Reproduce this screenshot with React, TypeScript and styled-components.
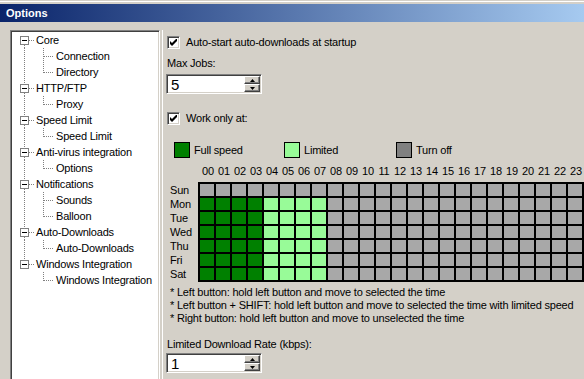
import styled, { createGlobalStyle } from "styled-components";

const GlobalStyle = createGlobalStyle`
  html, body {
    margin: 0;
    padding: 0;
    background: #d4d0c8;
    overflow: hidden;
  }
  body {
    font-family: "Liberation Sans", Arial, sans-serif;
    font-size: 11px;
    letter-spacing: -0.2px;
    color: #000;
  }
`;

type TreeNode = { label: string; children: string[] };

const tree: TreeNode[] = [
  { label: "Core", children: ["Connection", "Directory"] },
  { label: "HTTP/FTP", children: ["Proxy"] },
  { label: "Speed Limit", children: ["Speed Limit"] },
  { label: "Anti-virus integration", children: ["Options"] },
  { label: "Notifications", children: ["Sounds", "Balloon"] },
  { label: "Auto-Downloads", children: ["Auto-Downloads"] },
  { label: "Windows Integration", children: ["Windows Integration"] },
];

const days = ["Sun", "Mon", "Tue", "Wed", "Thu", "Fri", "Sat"];
const hours = Array.from({ length: 24 }, (_, i) => String(i).padStart(2, "0"));

type Slot = "full" | "limited" | "off";

// sunday off, weekdays: 00-03 full speed, 04-07 limited, rest off
const schedule: Slot[][] = days.map((_, d) =>
  hours.map((_, h) => {
    if (d === 0) return "off";
    if (h < 4) return "full";
    if (h < 8) return "limited";
    return "off";
  })
);

const slotColors: Record<Slot, string> = {
  full: "#008000",
  limited: "#98fb98",
  off: "#a8a8a8",
};

const notes = [
  "* Left button: hold left button and move to selected the time",
  "* Left button + SHIFT: hold left button and move to selected the time with limited speed",
  "* Right button: hold left button and move to unselected the time",
];

const DOTS = { stroke: "#808080", strokeDasharray: "1 1", shapeRendering: "crispEdges" as const };

function RootGlyph({ first, last }: { first: boolean; last: boolean }) {
  return (
    <svg width="21" height="16" viewBox="0 0 21 16">
      {!first && <line x1="11.5" y1="0" x2="11.5" y2="4" {...DOTS} />}
      {!last && <line x1="11.5" y1="13" x2="11.5" y2="16" {...DOTS} />}
      <line x1="16" y1="8.5" x2="21" y2="8.5" {...DOTS} />
      <rect x="7.5" y="4.5" width="8" height="8" fill="#fff" stroke="#808080" shapeRendering="crispEdges" />
      <line x1="9" y1="8.5" x2="14" y2="8.5" stroke="#000" shapeRendering="crispEdges" />
    </svg>
  );
}

function ChildGlyph({ rootLast, last }: { rootLast: boolean; last: boolean }) {
  return (
    <svg width="41" height="16" viewBox="0 0 41 16">
      {!rootLast && <line x1="11.5" y1="0" x2="11.5" y2="16" {...DOTS} />}
      <line x1="30.5" y1="0" x2="30.5" y2={last ? 9 : 16} {...DOTS} />
      <line x1="31" y1="8.5" x2="41" y2="8.5" {...DOTS} />
    </svg>
  );
}

function Check() {
  return (
    <svg width="7" height="7" viewBox="0 0 7 7">
      <polygon points="0,2 2,4 7,-1 7,2 2,7 0,5" fill="#000" />
    </svg>
  );
}

function Arrow({ up }: { up?: boolean }) {
  return (
    <svg width="5" height="3" viewBox="0 0 5 3">
      <polygon points={up ? "2.5,0 5,3 0,3" : "0,0 5,0 2.5,3"} fill="#000" />
    </svg>
  );
}

function Spin({ value }: { value: string }) {
  return (
    <SpinBox>
      <SpinValue>{value}</SpinValue>
      <SpinButtons>
        <SpinButton>
          <Arrow up />
        </SpinButton>
        <SpinButton>
          <Arrow />
        </SpinButton>
      </SpinButtons>
    </SpinBox>
  );
}

export default function App() {
  return (
    <>
      <GlobalStyle />
      <Window>
        <TitleBar>Options</TitleBar>
        <Body>
          <TreePane>
            {tree.map((node, i) => {
              const first = i === 0;
              const last = i === tree.length - 1;
              return (
                <div key={node.label}>
                  <TreeRow>
                    <RootGlyph first={first} last={last} />
                    <TreeLabel>{node.label}</TreeLabel>
                  </TreeRow>
                  {node.children.map((child, j) => (
                    <TreeRow key={child + j}>
                      <ChildGlyph rootLast={last} last={j === node.children.length - 1} />
                      <TreeLabel>{child}</TreeLabel>
                    </TreeRow>
                  ))}
                </div>
              );
            })}
          </TreePane>

          <ContentPane>
            <CheckRow>
              <CheckBox>
                <Check />
              </CheckBox>
              <CheckLabel>Auto-start auto-downloads at startup</CheckLabel>
            </CheckRow>

            <FieldLabel $top={7}>Max Jobs:</FieldLabel>
            <SpinWrap $top={4}>
              <Spin value="5" />
            </SpinWrap>

            <CheckRow $top={16}>
              <CheckBox>
                <Check />
              </CheckBox>
              <CheckLabel>Work only at:</CheckLabel>
            </CheckRow>

            <Legend>
              <LegendItem $width={110}>
                <Swatch $color="#008000" />
                <span>Full speed</span>
              </LegendItem>
              <LegendItem $width={112}>
                <Swatch $color="#98fb98" />
                <span>Limited</span>
              </LegendItem>
              <LegendItem $width={100}>
                <Swatch $color="#808080" />
                <span>Turn off</span>
              </LegendItem>
            </Legend>

            <Schedule>
              <DayColumn>
                <HourSpacer />
                {days.map((d) => (
                  <DayLabel key={d}>{d}</DayLabel>
                ))}
              </DayColumn>
              <div>
                <HourRow>
                  {hours.map((h) => (
                    <HourLabel key={h}>{h}</HourLabel>
                  ))}
                </HourRow>
                <Grid>
                  {schedule.map((row, d) =>
                    row.map((slot, h) => <Cell key={`${d}-${h}`} $color={slotColors[slot]} />)
                  )}
                </Grid>
              </div>
            </Schedule>

            <Notes>
              {notes.map((n) => (
                <Note key={n}>{n}</Note>
              ))}
            </Notes>

            <FieldLabel $top={13}>Limited Download Rate (kbps):</FieldLabel>
            <SpinWrap $top={2}>
              <Spin value="1" />
            </SpinWrap>
          </ContentPane>
        </Body>
      </Window>
    </>
  );
}

const Window = styled.div`
  width: 584px;
  height: 379px;
  overflow: hidden;
  background: linear-gradient(#d4d0c8 0 1px, #fff 1px 2px, #d4d0c8 2px 4px) top / 100% 4px no-repeat,
    #d4d0c8;
  padding-top: 4px;
  box-sizing: border-box;
`;

const TitleBar = styled.div`
  height: 18px;
  line-height: 18px;
  padding-left: 6px;
  background: linear-gradient(to right, #0a246a, #a6caf0);
  color: #fff;
  font-weight: bold;
  font-size: 11px;
  letter-spacing: 0;
`;

const Body = styled.div`
  display: flex;
  align-items: flex-start;
  padding: 8px 0 0 10px;
`;

const TreePane = styled.div`
  width: 150px;
  height: 360px;
  flex-shrink: 0;
  box-sizing: border-box;
  background: #fff;
  border: 1px solid;
  border-color: #808080 #fff #fff #808080;
  box-shadow: inset 1px 1px 0 #404040, inset -1px -1px 0 #d4d0c8;
  padding: 1px 0 0 2px;
  overflow: hidden;
`;

const TreeRow = styled.div`
  display: flex;
  align-items: center;
  height: 16px;
  white-space: nowrap;

  svg {
    flex-shrink: 0;
  }
`;

const TreeLabel = styled.span`
  margin-left: 2px;
  line-height: 16px;
`;

const ContentPane = styled.div`
  flex: 1;
  margin-left: 2px;
  height: 360px;
  border-left: 1px solid #fff;
  padding: 4px 0 0 4px;
  display: flex;
  flex-direction: column;
  align-items: flex-start;
`;

const CheckRow = styled.div<{ $top?: number }>`
  display: flex;
  align-items: center;
  height: 16px;
  margin-top: ${(p) => p.$top ?? 0}px;
`;

const CheckBox = styled.span`
  width: 13px;
  height: 13px;
  box-sizing: border-box;
  background: #fff;
  border: 1px solid;
  border-color: #808080 #fff #fff #808080;
  box-shadow: inset 1px 1px 0 #404040, inset -1px -1px 0 #d4d0c8;
  display: flex;
  align-items: center;
  justify-content: center;
`;

const CheckLabel = styled.span`
  margin-left: 6px;
`;

const FieldLabel = styled.div<{ $top: number }>`
  height: 13px;
  line-height: 13px;
  margin-top: ${(p) => p.$top}px;
`;

const SpinWrap = styled.div<{ $top: number }>`
  margin-top: ${(p) => p.$top}px;
  margin-left: -1px;
`;

const SpinBox = styled.div`
  width: 96px;
  height: 20px;
  box-sizing: border-box;
  background: #fff;
  border: 1px solid;
  border-color: #808080 #fff #fff #808080;
  box-shadow: inset 1px 1px 0 #404040, inset -1px -1px 0 #d4d0c8;
  display: flex;
  align-items: stretch;
  padding: 1px;
`;

const SpinValue = styled.span`
  flex: 1;
  padding-left: 3px;
  font-size: 15px;
  line-height: 17px;
`;

const SpinButtons = styled.div`
  width: 16px;
  display: flex;
  flex-direction: column;
`;

const SpinButton = styled.div`
  flex: 1;
  box-sizing: border-box;
  background: #d4d0c8;
  border: 1px solid;
  border-color: #fff #404040 #404040 #fff;
  box-shadow: inset -1px -1px 0 #808080;
  display: flex;
  align-items: center;
  justify-content: center;
`;

const Legend = styled.div`
  display: flex;
  align-items: center;
  height: 16px;
  margin-top: 16px;
  padding-left: 7px;
`;

const LegendItem = styled.div<{ $width: number }>`
  width: ${(p) => p.$width}px;
  display: flex;
  align-items: center;
  gap: 4px;
`;

const Swatch = styled.span<{ $color: string }>`
  width: 16px;
  height: 16px;
  box-sizing: border-box;
  border: 1px solid #000;
  background: ${(p) => p.$color};
`;

const Schedule = styled.div`
  display: flex;
  margin-top: 7px;
  padding-left: 3px;
`;

const DayColumn = styled.div`
  width: 28px;
  display: flex;
  flex-direction: column;
`;

const HourSpacer = styled.div`
  height: 18px;
`;

const DayLabel = styled.div`
  height: 14px;
  line-height: 14px;
`;

const HourRow = styled.div`
  display: flex;
  height: 13px;
  line-height: 13px;
  padding-left: 2px;
  margin-bottom: 4px;
`;

const HourLabel = styled.span`
  width: 16px;
  flex-shrink: 0;
  text-align: center;
`;

const Grid = styled.div`
  display: grid;
  grid-template-columns: repeat(24, 14px);
  grid-auto-rows: 12px;
  gap: 2px;
  padding: 2px;
  background: #000;
  width: max-content;
`;

const Cell = styled.div<{ $color: string }>`
  background: ${(p) => p.$color};
`;

const Notes = styled.div`
  margin-top: 4px;
  padding-left: 3px;
`;

const Note = styled.div`
  height: 13px;
  line-height: 13px;
  white-space: nowrap;
`;
